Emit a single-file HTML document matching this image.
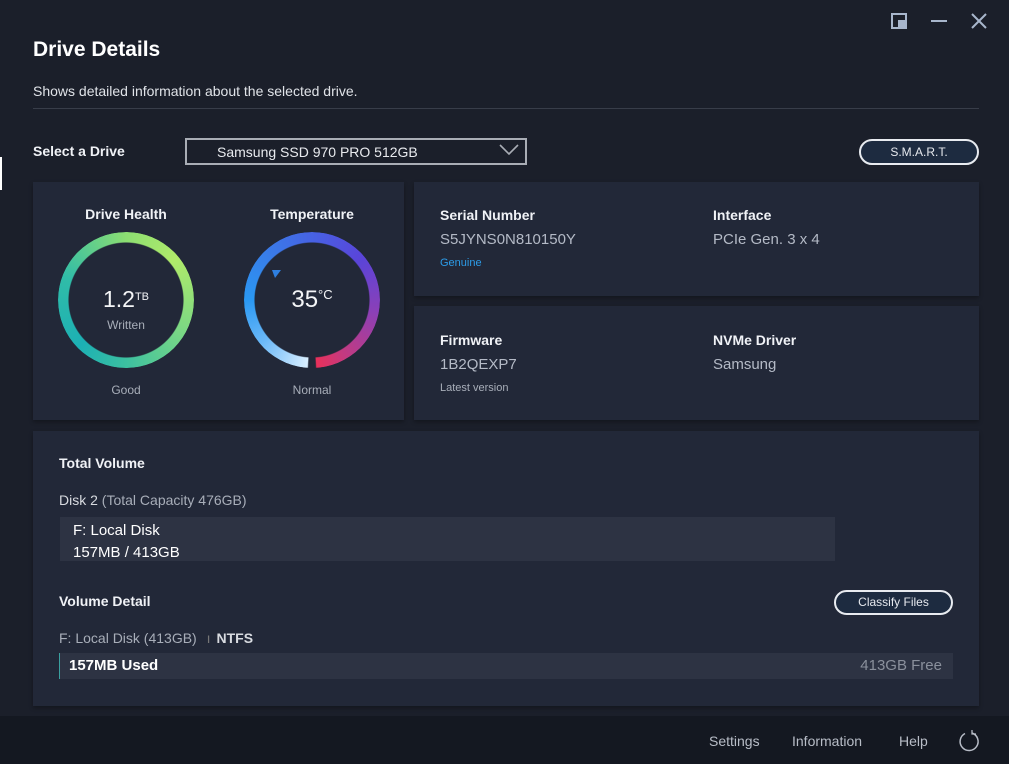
<!DOCTYPE html>
<html><head><meta charset="utf-8"><style>
*{margin:0;padding:0;box-sizing:border-box}
body{width:1009px;height:764px;background:#1b1f2a;font-family:"Liberation Sans",sans-serif;color:#fff;position:relative;overflow:hidden}
.a{position:absolute}
.card{position:absolute;background:#222838;box-shadow:0 2px 4px rgba(0,0,0,.3)}
.ring{position:absolute;width:136px;height:136px;border-radius:50%;-webkit-mask:radial-gradient(circle,transparent 57px,#000 58px);mask:radial-gradient(circle,transparent 57px,#000 58px)}
.lbl{font-size:14px;font-weight:bold;color:#f0f2f6}
.val{font-size:15px;color:#b4bac6}
.sm{font-size:12px;color:#a8aeb9}
.btn{position:absolute;border:2px solid #e8ebf0;border-radius:14px;background:#1d2b40;font-size:12px;color:#e6e9ee;text-align:center}
</style></head><body>
<div class="a" style="left:0;top:157px;width:2px;height:33px;background:#fff"></div>
<!-- window controls -->
<div class="a" style="left:891px;top:13px;width:16px;height:16px;border:2px solid #a8b6cc"></div>
<div class="a" style="left:898px;top:20px;width:7px;height:7px;background:#a8b6cc"></div>
<div class="a" style="left:931px;top:20px;width:16px;height:2px;background:#a8b6cc"></div>
<svg class="a" style="left:970px;top:12px" width="18" height="18"><path d="M2 2L16 16M16 2L2 16" stroke="#a8b6cc" stroke-width="2"/></svg>

<div class="a" style="left:33px;top:38px;font-size:21px;font-weight:bold">Drive Details</div>
<div class="a" style="left:33px;top:83px;font-size:14px;color:#e0e3e8">Shows detailed information about the selected drive.</div>
<div class="a" style="left:33px;top:108px;width:946px;height:1px;background:#383d49"></div>

<div class="a lbl" style="left:33px;top:143px">Select a Drive</div>
<div class="a" style="left:185px;top:138px;width:342px;height:27px;border:2px solid #a9adb5;font-size:14px;color:#e8eaee;padding:4px 0 0 30px">Samsung SSD 970 PRO 512GB</div>
<svg class="a" style="left:499px;top:144px" width="20" height="12"><path d="M1 1L10 10L19 1" stroke="#a9adb5" stroke-width="1.6" fill="none"/></svg>
<div class="btn" style="left:859px;top:139px;width:120px;height:26px;line-height:22px">S.M.A.R.T.</div>

<div class="card" style="left:33px;top:182px;width:371px;height:238px"></div>
<div class="a lbl" style="left:33px;top:206px;width:186px;text-align:center">Drive Health</div>
<div class="a lbl" style="left:219px;top:206px;width:186px;text-align:center">Temperature</div>
<div class="ring" style="left:58px;top:232px;background:conic-gradient(#8cde72,#b0ea6a 50deg,#7ad884 120deg,#3cc0a0 180deg,#1cb0b4 225deg,#30bca8 290deg,#8cde72)"></div>
<div class="ring" style="left:244px;top:232px;background:conic-gradient(from 180deg,transparent 0deg 3deg,#d8eeff 4deg,#6ab8f8 50deg,#2a98f2 90deg,#3a7ae8 140deg,#4a5ce2 190deg,#5a44d8 230deg,#8a40b8 280deg,#c43a80 330deg,#e8305a 356deg,transparent 357deg)"></div>
<div class="a" style="left:33px;top:286px;width:186px;text-align:center;font-size:23px;color:#f4f5f7">1.2<span style="font-size:11px;vertical-align:7px">TB</span></div>
<div class="a sm" style="left:33px;top:318px;width:186px;text-align:center">Written</div>
<div class="a" style="left:219px;top:286px;width:186px;text-align:center;font-size:24px;color:#f4f5f7">35<span style="font-size:13px;vertical-align:8px">°C</span></div>
<svg class="a" style="left:272px;top:270px" width="10" height="10"><path d="M0 0L9 0L3 8Z" fill="#2e7fe0"/></svg>
<div class="a sm" style="left:33px;top:383px;width:186px;text-align:center">Good</div>
<div class="a sm" style="left:219px;top:383px;width:186px;text-align:center">Normal</div>

<div class="card" style="left:414px;top:182px;width:565px;height:114px"></div>
<div class="a lbl" style="left:440px;top:207px">Serial Number</div>
<div class="a val" style="left:440px;top:231px">S5JYNS0N810150Y</div>
<div class="a" style="left:440px;top:257px;font-size:11px;color:#2c9ce8">Genuine</div>
<div class="a lbl" style="left:713px;top:207px">Interface</div>
<div class="a val" style="left:713px;top:231px">PCIe Gen. 3 x 4</div>

<div class="card" style="left:414px;top:306px;width:565px;height:114px"></div>
<div class="a lbl" style="left:440px;top:332px">Firmware</div>
<div class="a val" style="left:440px;top:356px">1B2QEXP7</div>
<div class="a" style="left:440px;top:382px;font-size:11px;color:#a8aeb9">Latest version</div>
<div class="a lbl" style="left:713px;top:332px">NVMe Driver</div>
<div class="a val" style="left:713px;top:356px">Samsung</div>

<div class="card" style="left:33px;top:431px;width:946px;height:275px"></div>
<div class="a lbl" style="left:59px;top:455px">Total Volume</div>
<div class="a" style="left:59px;top:492px;font-size:14px;color:#a8aeb9"><span style="color:#d8dbe0">Disk 2</span> (Total Capacity 476GB)</div>
<div class="a" style="left:60px;top:517px;width:775px;height:44px;background:#2d3343"></div>
<div class="a" style="left:73px;top:520px;font-size:15px;color:#fff;line-height:22px">F: Local Disk<br>157MB / 413GB</div>
<div class="a lbl" style="left:59px;top:593px">Volume Detail</div>
<div class="btn" style="left:834px;top:590px;width:119px;height:25px;line-height:21px">Classify Files</div>
<div class="a" style="left:59px;top:630px;font-size:14px;color:#a8aeb9">F: Local Disk (413GB) <span style="color:#777;margin:0 6px">ı</span><b style="color:#d8dbe0">NTFS</b></div>
<div class="a" style="left:59px;top:653px;width:894px;height:26px;background:#2d3343;border-left:1px solid #3aa0a0"></div>
<div class="a" style="left:69px;top:657px;font-size:15px;font-weight:bold;color:#fff">157MB Used</div>
<div class="a" style="left:820px;top:657px;width:122px;text-align:right;font-size:15px;color:#8a909c">413GB Free</div>

<div class="a" style="left:0;top:716px;width:1009px;height:48px;background:#141821"></div>
<div class="a" style="left:709px;top:733px;font-size:14px;color:#b8bdc7">Settings</div>
<div class="a" style="left:792px;top:733px;font-size:14px;color:#b8bdc7">Information</div>
<div class="a" style="left:899px;top:733px;font-size:14px;color:#b8bdc7">Help</div>
<svg class="a" style="left:958px;top:729px" width="22" height="24"><path d="M14 4A9 9 0 1 1 7 4.5" stroke="#b8bdc7" stroke-width="1.5" fill="none"/><path d="M14 1L14 5L18 5" stroke="#b8bdc7" stroke-width="1.3" fill="none"/></svg>
</body></html>
